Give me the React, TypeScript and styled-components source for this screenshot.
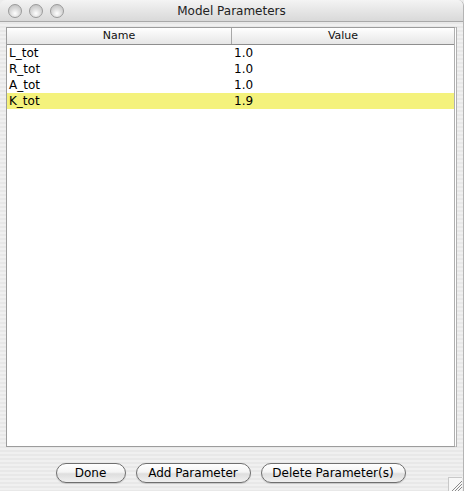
import React from 'react';
import styled, {createGlobalStyle} from 'styled-components';

const GlobalStyle = createGlobalStyle`
  html, body {
    margin: 0;
    padding: 0;
    background: #ececec;
  }
  body {
    font-family: "DejaVu Sans", "Liberation Sans", sans-serif;
  }
`;

const Window = styled.div`
  position: relative;
  width: 464px;
  height: 491px;
  display: flex;
  flex-direction: column;
  box-sizing: border-box;
  border-right: 1px solid #b4b4b4;
  border-top-right-radius: 6px;
  border-top-left-radius: 6px;
  overflow: hidden;
  background: repeating-linear-gradient(
    to bottom,
    #f0f0f0 0px,
    #f0f0f0 2px,
    #e8e8e8 2px,
    #e8e8e8 4px
  );
`;

const TitleBar = styled.div`
  height: 21px;
  flex: none;
  display: flex;
  align-items: center;
  position: relative;
  border-bottom: 1px solid #a9a9a9;
  background: linear-gradient(to bottom, #f4f4f4 0%, #e6e6e6 50%, #d9d9d9 100%);
`;

const Lights = styled.div`
  display: flex;
  gap: 7px;
  padding-left: 8px;
`;

const Light = styled.span`
  width: 14px;
  height: 14px;
  border-radius: 50%;
  box-sizing: border-box;
  border: 1px solid #9a9a9a;
  background: radial-gradient(circle at 50% 70%, #ffffff 0%, #dcdcdc 45%, #b9b9b9 100%);
`;

const Title = styled.div`
  position: absolute;
  left: 0;
  right: 0;
  text-align: center;
  font-size: 12px;
  color: #222;
  pointer-events: none;
`;

const Body = styled.div`
  flex: 1;
  display: flex;
  flex-direction: column;
  padding: 5px 6px 0 6px;
`;

const TablePane = styled.div`
  height: 420px;
  box-sizing: border-box;
  border: 1px solid #9c9c9c;
  border-right: 3px double #b0b0b0;
  background: #fff;
  display: flex;
  flex-direction: column;
`;

const HeaderRow = styled.div`
  display: grid;
  grid-template-columns: 225px 1fr;
  height: 16px;
  border-bottom: 1px solid #8e8e8e;
  background: linear-gradient(to bottom, #ffffff 0%, #f2f2f2 50%, #e6e6e6 100%);
`;

const HeaderCell = styled.div<{$last?: boolean}>`
  font-size: 11px;
  line-height: 16px;
  text-align: center;
  color: #111;
  border-right: ${(p) => (p.$last ? 'none' : '1px solid #a8a8a8')};
`;

const Row = styled.div<{$selected?: boolean}>`
  display: grid;
  grid-template-columns: 225px 1fr;
  height: 16px;
  background: ${(p) => (p.$selected ? '#f4f27c' : '#fff')};
`;

const Cell = styled.div`
  font-size: 12px;
  line-height: 16px;
  padding-left: 2px;
  color: #000;
  white-space: nowrap;
`;

const ButtonBar = styled.div`
  display: flex;
  justify-content: center;
  gap: 10px;
  padding-top: 16px;
  padding-right: 2px;
`;

const Pill = styled.button<{$w: number}>`
  width: ${(p) => p.$w}px;
  height: 20px;
  border-radius: 10px;
  border: 1px solid #6f6f6f;
  background: linear-gradient(to bottom, #ffffff 0%, #f4f4f4 45%, #dedede 55%, #f0f0f0 100%);
  font-family: "DejaVu Sans", "Liberation Sans", sans-serif;
  font-size: 12px;
  color: #000;
  padding: 0;
  box-shadow: 0 1px 1px rgba(0, 0, 0, 0.15);
`;

const Grip = styled.svg`
  position: absolute;
  right: 1px;
  bottom: 0;
`;

const rows = [
  {name: 'L_tot', value: '1.0'},
  {name: 'R_tot', value: '1.0'},
  {name: 'A_tot', value: '1.0'},
  {name: 'K_tot', value: '1.9', selected: true}
];

const App = () => {
  return (
    <>
      <GlobalStyle />
      <Window>
        <TitleBar>
          <Lights>
            <Light />
            <Light />
            <Light />
          </Lights>
          <Title>Model Parameters</Title>
        </TitleBar>
        <Body>
          <TablePane>
            <HeaderRow>
              <HeaderCell>Name</HeaderCell>
              <HeaderCell $last>Value</HeaderCell>
            </HeaderRow>
            {rows.map((r) => (
              <Row key={r.name} $selected={r.selected}>
                <Cell>{r.name}</Cell>
                <Cell>{r.value}</Cell>
              </Row>
            ))}
          </TablePane>
          <ButtonBar>
            <Pill $w={70}>Done</Pill>
            <Pill $w={115}>Add Parameter</Pill>
            <Pill $w={145}>Delete Parameter(s)</Pill>
          </ButtonBar>
        </Body>
        <Grip width="14" height="14" viewBox="0 0 14 14">
          <rect x="0" y="0" width="14" height="14" fill="#f7f7f7" />
          <line x1="0.5" y1="0" x2="0.5" y2="14" stroke="#c8c8c8" />
          <line x1="0" y1="0.5" x2="14" y2="0.5" stroke="#c8c8c8" />
          <line x1="4" y1="14" x2="14" y2="4" stroke="#8a8a8a" />
          <line x1="7" y1="14" x2="14" y2="7" stroke="#8a8a8a" />
          <line x1="10" y1="14" x2="14" y2="10" stroke="#8a8a8a" />
        </Grip>
      </Window>
    </>
  );
};

export default App;
